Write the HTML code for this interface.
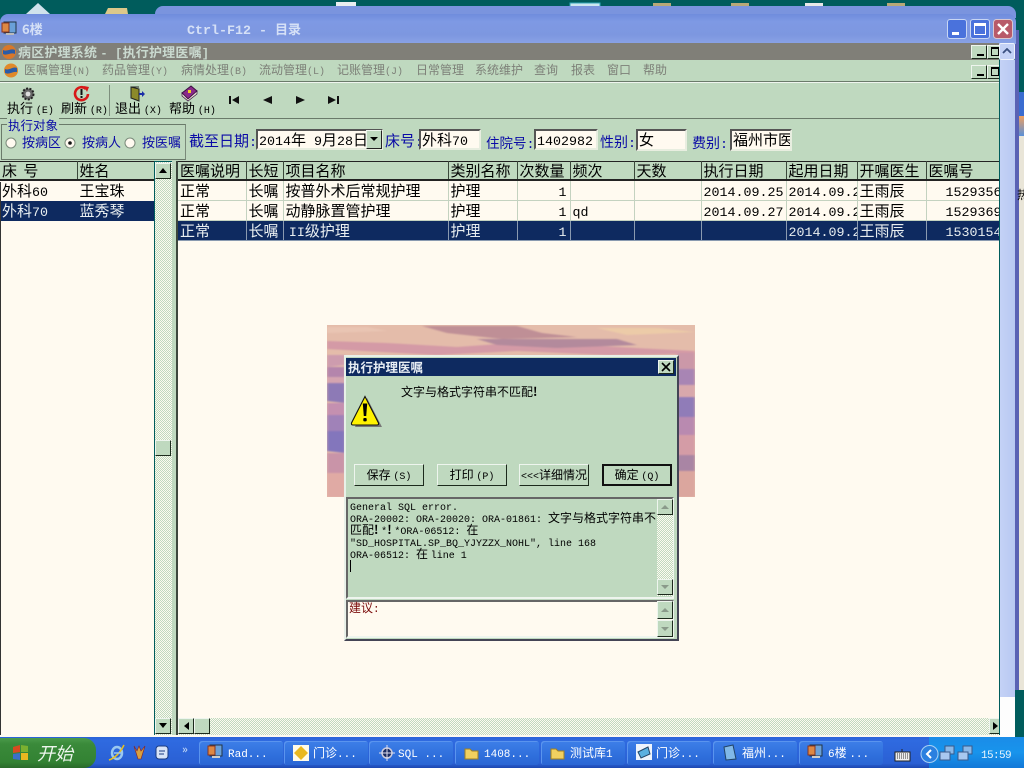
<!DOCTYPE html>
<html lang="zh"><head><meta charset="utf-8"><title>病区护理系统</title>
<style>
html,body{margin:0;padding:0;width:1024px;height:768px;overflow:hidden;background:#005c5c}
body{position:relative;font-family:"WenQuanYi Zen Hei","Noto Sans CJK SC",sans-serif;font-size:15px;color:#000}
div,span.a,svg.a{position:absolute}
.t{position:absolute;white-space:nowrap;line-height:20px}
.l{font-family:"Liberation Mono",monospace;font-size:13.33px;line-height:0}
.s{font-size:12px}.s .l{font-size:11px}
.b{color:#0a0aa6;font-size:14px}
.g{background:#bfd9bf}
.up{background:#bfd9bf;border:1px solid;border-color:#eef5ee #1c2a1c #1c2a1c #eef5ee;box-sizing:border-box}
.chk{background:conic-gradient(#bfd9bf 25%,#fdfaf0 0 50%,#bfd9bf 0 75%,#fdfaf0 0) 0 0/2px 2px}
.box{background:#fffaf0;border:2px solid;border-color:#555 #e8eee0 #e8eee0 #555;box-sizing:border-box;overflow:hidden;white-space:nowrap;line-height:17px;padding-left:1px}
.m{color:#7d8078;font-size:12px;line-height:16px;top:62px;position:absolute;white-space:nowrap}
.m .l{font-size:10px}
table{border-collapse:collapse;table-layout:fixed;position:absolute;left:0;top:0}
td{height:19px;padding:0 0 0 2px;overflow:hidden;white-space:nowrap;line-height:19px;border-right:1px solid #c4d2c0;border-bottom:1px solid #c4d2c0;box-sizing:content-box;background:#fffaf0}
tr.h td{background:#bfd9bf;height:17px;line-height:17px;border-right:1px solid #3a483a;border-bottom:2px solid #222;border-top:1px solid #222}
tr.sel td{background:#0e2a60;color:#e8eef0;border-color:#8a9ab0}
.task{position:absolute;top:741px;height:24px;width:84px;background:linear-gradient(#3e7fe8,#2f6fdc 60%,#2a66d4);border-radius:3px;color:#fff;font-size:12px;line-height:23px;white-space:nowrap;box-shadow:inset 1px 1px 0 #5a94ee}
.task .l{font-size:11px}
.task b{font-weight:normal;position:absolute;left:22px;top:0}
.btn{font-size:12px;line-height:20px;text-align:center;white-space:nowrap}
.btn .l{font-size:10px}
.mm .l{font-size:10px}
</style></head><body>

<!-- desktop fragments -->
<svg class="a" style="left:0;top:0" width="1024" height="14">
<path d="M26 14L38 3L50 14Z" fill="#cfe2ec"/><path d="M105 14L108 8H127L128 14Z" fill="#dcc88a"/>
<rect x="336" y="2" width="20" height="4" fill="#e8eef0"/>
<rect x="570" y="3" width="30" height="4" fill="#cce6f0" stroke="#3ab" stroke-width="1"/>
<rect x="653" y="3" width="18" height="3" fill="#b8a878"/><rect x="731" y="3" width="18" height="3" fill="#b8a878"/>
<rect x="805" y="3" width="18" height="3" fill="#e8e8e8"/><rect x="887" y="3" width="18" height="3" fill="#b8a878"/>
</svg>
<div style="left:155px;top:6px;width:861px;height:12px;background:#7a94de;border-radius:8px 8px 0 0"></div>

<!-- right of the window -->
<div style="left:1015px;top:92px;width:9px;height:598px;background:#e9e5d8"></div>
<div style="left:1019px;top:92px;width:5px;height:24px;background:#3a6cd0"></div>
<div style="left:1019px;top:116px;width:5px;height:20px;background:linear-gradient(#f0a060,#5a90d8)"></div>
<div style="left:1015px;top:30px;width:4px;height:660px;background:#5a62b4"></div>
<div class="t s" style="left:1017px;top:185px">热</div>

<!-- title bar -->
<div style="left:0;top:14px;width:1016px;height:30px;background:linear-gradient(#6f8cdc,#7e99e4 25%,#7d97e0 70%,#8aa3e6);border-radius:8px 8px 0 0"></div>
<svg class="a" style="left:1px;top:20px" width="17" height="17"><rect x="3" y="2" width="12" height="11" fill="#6aa0d8" stroke="#234"/><rect x="1" y="3" width="7" height="9" fill="#d84" stroke="#832"/><rect x="5" y="13" width="8" height="2" fill="#bbb"/></svg>
<div class="t" style="left:22px;top:19px;color:#d5e0f6;font-weight:bold;font-size:13px">6楼</div>
<div class="t" style="left:187px;top:19px;color:#d5e0f6;font-size:13px;font-weight:bold"><span class="l" style="font-weight:bold">Ctrl-F12 - </span>目录</div>
<div style="left:947px;top:19px;width:20px;height:20px;background:#4a72dc;border:1px solid #c8d6f4;border-radius:3px;box-sizing:border-box"><div style="left:4px;top:12px;width:7px;height:3px;background:#fff"></div></div>
<div style="left:970px;top:19px;width:20px;height:20px;background:#4a72dc;border:1px solid #c8d6f4;border-radius:3px;box-sizing:border-box"><div style="left:3px;top:3px;width:12px;height:12px;border:1px solid #fff;border-top-width:3px;box-sizing:border-box"></div></div>
<svg class="a" style="left:993px;top:19px" width="20" height="20"><rect x=".5" y=".5" width="19" height="19" rx="3" fill="#b85a6a" stroke="#d8c8d0"/><path d="M5 5L15 15M15 5L5 15" stroke="#fff" stroke-width="2.4"/></svg>

<!-- caption -->
<div style="left:0;top:43px;width:999px;height:17px;background:#807f78"></div>
<svg class="a" style="left:1px;top:44px" width="16" height="16"><circle cx="8" cy="8" r="7" fill="#d8782a"/><path d="M2 6C6 8 10 4 14 6V10C10 8 6 12 2 10Z" fill="#2a5ca8"/></svg>
<div class="t" style="left:18px;top:42px;color:#c9d9cf;font-size:13px;font-weight:bold;letter-spacing:.2px">病区护理系统 <span class="l" style="font-weight:bold;font-size:12px">- [</span>执行护理医嘱<span class="l" style="font-weight:bold;font-size:12px">]</span></div>
<div class="up" style="left:971px;top:45px;width:16px;height:14px"><div style="left:5px;top:8px;width:7px;height:2px;background:#000"></div></div>
<div class="up" style="left:987px;top:45px;width:12px;height:14px;border-right:0"><div style="left:3px;top:1px;width:8px;height:9px;border:1px solid #000;border-top-width:2px;box-sizing:border-box"></div></div>

<!-- menu -->
<div class="g" style="left:0;top:60px;width:999px;height:21px"></div>
<svg class="a" style="left:3px;top:62px" width="16" height="17"><circle cx="8" cy="8.5" r="7" fill="#e08a2a"/><path d="M2 7C6 9 10 4 14 6V10C10 9 6 13 2 11Z" fill="#2a5ca8"/></svg>
<div class="m" style="left:24px">医嘱管理<span class="l">(N)</span></div>
<div class="m" style="left:102px">药品管理<span class="l">(Y)</span></div>
<div class="m" style="left:181px">病情处理<span class="l">(B)</span></div>
<div class="m" style="left:259px">流动管理<span class="l">(L)</span></div>
<div class="m" style="left:337px">记账管理<span class="l">(J)</span></div>
<div class="m" style="left:416px">日常管理</div>
<div class="m" style="left:475px">系统维护</div>
<div class="m" style="left:534px">查询</div>
<div class="m" style="left:571px">报表</div>
<div class="m" style="left:607px">窗口</div>
<div class="m" style="left:643px">帮助</div>
<div class="up" style="left:971px;top:65px;width:16px;height:14px"><div style="left:5px;top:8px;width:7px;height:2px;background:#000"></div></div>
<div class="up" style="left:987px;top:65px;width:12px;height:14px;border-right:0"><div style="left:3px;top:1px;width:8px;height:9px;border:1px solid #000;border-top-width:2px;box-sizing:border-box"></div></div>
<div style="left:0;top:81px;width:999px;height:1px;background:#6a7a6a"></div>

<!-- toolbar -->
<div class="g" style="left:0;top:82px;width:999px;height:36px"></div>
<div style="left:0;top:82px;width:999px;height:1px;background:#eef5ee"></div>
<div style="left:0;top:118px;width:999px;height:1px;background:#6a7a6a"></div>
<div style="left:109px;top:85px;width:1px;height:31px;background:#7d8f7d"></div>
<svg class="a" style="left:20px;top:86px" width="16" height="16"><circle cx="8" cy="8" r="5.5" fill="#666" stroke="#222" stroke-width="2" stroke-dasharray="2 1.4"/><circle cx="8" cy="8" r="2.4" fill="#ddd"/></svg>
<svg class="a" style="left:73px;top:85px" width="17" height="17"><path d="M13 4A6.5 6.5 0 1 0 15 9" fill="none" stroke="#d81818" stroke-width="2.6"/><path d="M11 1L16 2L14 7Z" fill="#d81818"/><rect x="7.5" y="4" width="2" height="6" fill="#111"/><rect x="7.5" y="11" width="2" height="2" fill="#111"/></svg>
<svg class="a" style="left:130px;top:86px" width="16" height="16"><path d="M1 1L9 3V15L1 12Z" fill="#8c8a2a" stroke="#222"/><path d="M9 1H1" stroke="#222"/><path d="M9 7H12V5L15 8L12 11V9H9Z" fill="#1a2ca8"/></svg>
<svg class="a" style="left:181px;top:85px" width="17" height="17"><path d="M1 8L10 1L16 6L7 14Z" fill="#8a2a8a" stroke="#3a1040"/><path d="M1 8V11L7 16L16 9V6L7 14Z" fill="#e8e0d0" stroke="#3a1040" stroke-width=".7"/><rect x="7" y="5" width="3" height="3" fill="#f0d020"/></svg>
<div class="t" style="left:7px;top:98px;font-size:13px">执行 <span class="l" style="font-size:10px">(E)</span></div>
<div class="t" style="left:61px;top:98px;font-size:13px">刷新 <span class="l" style="font-size:10px">(R)</span></div>
<div class="t" style="left:115px;top:98px;font-size:13px">退出 <span class="l" style="font-size:10px">(X)</span></div>
<div class="t" style="left:169px;top:98px;font-size:13px">帮助 <span class="l" style="font-size:10px">(H)</span></div>
<svg class="a" style="left:225px;top:94px" width="120" height="12" fill="#111"><rect x="4" y="2" width="2" height="8"/><path d="M14 2V10L7 6Z"/><path d="M47 2V10L38 6Z"/><path d="M71 2V10L80 6Z"/><path d="M103 2V10L111 6Z"/><rect x="112" y="2" width="2" height="8"/></svg>

<!-- filter row -->
<div class="g" style="left:0;top:119px;width:999px;height:42px"></div>
<div style="left:1px;top:124px;width:185px;height:36px;border:1px solid #6a7a6a;border-right-color:#7a8a7a;box-sizing:border-box"></div>
<div class="t" style="left:7px;top:115px;background:#bfd9bf;color:#0a0aa6;font-size:12.5px;padding:0 1px;line-height:19px">执行对象</div>
<svg class="a" style="left:4px;top:136px" width="135" height="14"><circle cx="7" cy="7" r="5" fill="#fffaf0" stroke="#7a8a7a"/><circle cx="66" cy="7" r="5" fill="#fffaf0" stroke="#7a8a7a"/><circle cx="66" cy="7" r="1.8" fill="#111"/><circle cx="126" cy="7" r="5" fill="#fffaf0" stroke="#7a8a7a"/></svg>
<div class="t" style="left:22px;top:132px;color:#0a0aa6;font-size:13px">按病区</div>
<div class="t" style="left:82px;top:132px;color:#0a0aa6;font-size:13px">按病人</div>
<div class="t" style="left:142px;top:132px;color:#0a0aa6;font-size:13px">按医嘱</div>
<div class="t b" style="left:189px;top:131px;font-size:15px">截至日期<span class="l">:</span></div>
<div class="box" style="left:256px;top:129px;width:127px;height:21px;font-size:15px"><span class="l">2014</span>年<span class="l">&nbsp;9</span>月<span class="l">28</span>日</div>
<div class="up" style="left:366px;top:130px;width:16px;height:19px;border-color:#eef5ee #222 #222 #eef5ee"><svg class="a" style="left:3px;top:6px" width="9" height="5"><path d="M0 0H8L4 4Z"/></svg></div>
<div class="t b" style="left:385px;top:131px;font-size:15px">床号<span class="l">:</span></div>
<div class="box" style="left:419px;top:129px;width:62px;height:21px;font-size:15px">外科<span class="l">70</span></div>
<div class="t b" style="left:486px;top:132px;font-size:13.5px">住院号<span class="l">:</span></div>
<div class="box" style="left:534px;top:129px;width:64px;height:21px"><span class="l">1402982</span></div>
<div class="t b" style="left:600px;top:132px">性别<span class="l">:</span></div>
<div class="box" style="left:636px;top:129px;width:51px;height:22px">女</div>
<div class="t b" style="left:692px;top:133px">费别<span class="l">:</span></div>
<div class="box" style="left:730px;top:129px;width:62px;height:22px">福州市医</div>

<!-- left grid -->
<div style="left:0;top:161px;width:154px;height:574px;background:#fffaf0;overflow:hidden">
<table style="width:154px"><colgroup><col style="width:77px"><col style="width:77px"></colgroup>
<tr class="h"><td>床 <span style="padding-left:3px">号</span></td><td>姓名</td></tr>
<tr><td style="border-right-color:#fffaf0;border-bottom-color:#fffaf0">外科<span class="l">60</span></td><td style="border-color:#fffaf0">王宝珠</td></tr>
<tr class="sel"><td style="border-color:#0e2a60">外科<span class="l">70</span></td><td style="border-color:#0e2a60">蓝秀琴</td></tr>
</table></div>
<div style="left:0;top:182px;width:1px;height:553px;background:#333"></div>
<div class="chk" style="left:155px;top:162px;width:17px;height:573px"></div>
<div class="up" style="left:155px;top:163px;width:16px;height:16px"><svg class="a" style="left:3px;top:4px" width="9" height="6"><path d="M0 5H8L4 0Z"/></svg></div>
<div class="up" style="left:155px;top:718px;width:16px;height:16px"><svg class="a" style="left:3px;top:4px" width="9" height="6"><path d="M0 0H8L4 5Z"/></svg></div>
<div class="up" style="left:155px;top:440px;width:16px;height:16px"></div>
<div class="g" style="left:172px;top:161px;width:4px;height:574px"></div>
<div style="left:176px;top:161px;width:2px;height:574px;background:#3c463c"></div>

<!-- right grid -->
<div style="left:178px;top:161px;width:821px;height:557px;background:#fffaf0;overflow:hidden">
<table style="width:821px">
<colgroup><col style="width:68px"><col style="width:37px"><col style="width:165px"><col style="width:69px"><col style="width:53px"><col style="width:64px"><col style="width:67px"><col style="width:85px"><col style="width:71px"><col style="width:69px"><col style="width:73px"></colgroup>
<tr class="h"><td>医嘱说明</td><td>长短</td><td>项目名称</td><td>类别名称</td><td>次数量</td><td>频次</td><td>天数</td><td>执行日期</td><td>起用日期</td><td>开嘱医生</td><td>医嘱号</td></tr>
<tr><td>正常</td><td>长嘱</td><td>按普外术后常规护理</td><td>护理</td><td style="text-align:right;padding-right:3px"><span class="l">1</span></td><td></td><td></td><td><span class="l">2014.09.25</span></td><td><span class="l">2014.09.29</span></td><td>王雨辰</td><td style="padding-left:19px"><span class="l">1529356</span></td></tr>
<tr><td>正常</td><td>长嘱</td><td>动静脉置管护理</td><td>护理</td><td style="text-align:right;padding-right:3px"><span class="l">1</span></td><td><span class="l">qd</span></td><td></td><td><span class="l">2014.09.27</span></td><td><span class="l">2014.09.29</span></td><td>王雨辰</td><td style="padding-left:19px"><span class="l">1529369</span></td></tr>
<tr class="sel"><td>正常</td><td>长嘱</td><td>&nbsp;<span class="l">II</span>级护理</td><td>护理</td><td style="text-align:right;padding-right:3px"><span class="l">1</span></td><td></td><td></td><td></td><td><span class="l">2014.09.29</span></td><td>王雨辰</td><td style="padding-left:19px"><span class="l">1530154</span></td></tr>
</table></div>
<div class="chk" style="left:178px;top:718px;width:821px;height:17px"></div>
<div class="up" style="left:178px;top:718px;width:16px;height:16px"><svg class="a" style="left:5px;top:3px" width="6" height="9"><path d="M5 0V8L0 4Z"/></svg></div>
<div class="up" style="left:194px;top:718px;width:16px;height:16px"></div>
<div class="up" style="left:989px;top:718px;width:10px;height:16px;border-right:0"><svg class="a" style="left:3px;top:3px" width="6" height="9"><path d="M0 0V8L5 4Z"/></svg></div>
<div style="left:0;top:735px;width:1000px;height:3px;background:#fdfaf0"></div>

<!-- window scrollbar -->
<div style="left:1000px;top:60px;width:15px;height:637px;background:linear-gradient(90deg,#c4d2f6,#b8c8f2)"></div>
<div style="left:1000px;top:697px;width:15px;height:41px;background:#fdfdfd"></div>
<div style="left:999px;top:43px;width:16px;height:17px;background:#c4d2f6;border:1px solid #eef2fc;border-radius:2px;box-sizing:border-box"><svg class="a" style="left:2px;top:4px" width="10" height="7"><path d="M1 5L5 1L9 5" fill="none" stroke="#3a5080" stroke-width="1.8"/></svg></div>

<!-- dialog backdrop -->
<svg class="a" style="left:327px;top:325px" width="368" height="172">
<defs><filter id="bl" x="-5%" y="-20%" width="110%" height="140%"><feGaussianBlur stdDeviation="1.2 .7"/></filter></defs>
<rect width="368" height="172" fill="#e4bcaa"/>
<g filter="url(#bl)">
<path d="M95 1H190L215 8L250 12L175 14L120 8Z" fill="#bf8f96"/>
<path d="M0 16L60 18L130 22L200 17L290 22L368 26V29L280 30L190 26L110 30L0 24Z" fill="#d49aa6"/>
<path d="M150 14H290L310 20L230 23L170 20Z" fill="#b38a9c"/>
<path d="M0 2H40L60 6L0 8Z" fill="#e9c5b3"/><path d="M270 3H330L368 7L300 10Z" fill="#eccba8"/>
<path d="M0 30H18V40L0 42Z" fill="#cd9cae"/><path d="M0 42H18V52H0Z" fill="#b485ac"/><path d="M0 52H18V58H0Z" fill="#d4a4b0"/>
<path d="M0 58H18V78L0 76Z" fill="#8d7ab6"/><path d="M0 78H18V90H0Z" fill="#c490b0"/><path d="M0 90H18V106H0Z" fill="#a082b8"/><path d="M0 106H18V128L0 126Z" fill="#8376bc"/><path d="M0 128H18V148H0Z" fill="#c994a8"/><path d="M0 148H18V172H0Z" fill="#e0aaa4"/>
<path d="M350 28H368V44H350Z" fill="#cb98a8"/><path d="M350 44H368V60H350Z" fill="#a885b4"/><path d="M350 60H368V72H350Z" fill="#d8a8ac"/><path d="M350 72H368V92H350Z" fill="#907cb8"/><path d="M350 92H368V110H350Z" fill="#b98ab0"/><path d="M350 110H368V130H350Z" fill="#d49ca6"/><path d="M350 130H368V146H350Z" fill="#a985a4"/><path d="M350 146H368V172H350Z" fill="#dba69e"/>
</g>
</svg>

<!-- dialog -->
<div class="g" style="left:344px;top:355px;width:335px;height:286px;border:2px solid;border-color:#e8f0e8 #445 #445 #e8f0e8;box-sizing:border-box"></div>
<div style="left:346px;top:358px;width:330px;height:18px;background:#0e2a60"></div>
<div class="t" style="left:348px;top:357px;color:#e8eef4;font-size:12.5px;font-weight:bold">执行护理医嘱</div>
<div class="up" style="left:658px;top:360px;width:16px;height:14px"><svg class="a" style="left:2px;top:1px" width="10" height="10"><path d="M1 1L9 9M9 1L1 9" stroke="#000" stroke-width="1.6"/></svg></div>
<svg class="a" style="left:350px;top:395px" width="34" height="34"><path d="M15 2L30 31H3Z" fill="#777" transform="translate(2 1)"/><path d="M15 1.500L28.500 28Q29 30 27 30H3Q1 30 1.500 28Z" fill="#fff200" stroke="#111" stroke-width="1.100"/><path d="M12.800 8.500H17.200L16.200 21H13.800Z" fill="#000"/><rect x="13.300" y="23" width="3.400" height="3.400" rx="1" fill="#000"/></svg>
<div class="t" style="left:401px;top:382px;font-size:12px">文字与格式字符串不匹配<b style="font-size:12px">!</b></div>

<div class="up btn" style="left:354px;top:464px;width:70px;height:22px">保存 <span class="l">(S)</span></div>
<div class="up btn" style="left:437px;top:464px;width:70px;height:22px">打印 <span class="l">(P)</span></div>
<div class="up btn" style="left:519px;top:464px;width:70px;height:22px"><span class="l">&lt;&lt;&lt;</span>详细情况</div>
<div class="up btn" style="left:602px;top:464px;width:70px;height:22px;border:2px solid #111;line-height:18px">确定 <span class="l">(Q)</span></div>

<div style="left:346px;top:497px;width:328px;height:102px;background:#bfd9bf;border:2px solid;border-color:#666 #eef5ee #eef5ee #666;box-sizing:border-box;overflow:hidden"></div>
<div class="mm" style="left:350px;top:500px;font-size:12px;line-height:12px;width:307px;white-space:nowrap">
<span class="l">General SQL error.</span><br>
<span class="l">ORA-20002: ORA-20020: ORA-01861: </span>文字与格式字符串不<br>
匹配<b>!</b> <span class="l">*</span><b>!</b> <span class="l">*ORA-06512: </span>在<br>
<span class="l">"SD_HOSPITAL.SP_BQ_YJYZZX_NOHL", line 168</span><br>
<span class="l">ORA-06512: </span>在 <span class="l">line 1</span></div>
<div style="left:350px;top:560px;width:1px;height:12px;background:#000"></div>
<div class="chk" style="left:657px;top:499px;width:16px;height:97px"></div>
<div class="up" style="left:657px;top:499px;width:16px;height:16px"><svg class="a" style="left:3px;top:5px" width="9" height="5"><path d="M0 4H8L4 0Z" fill="#8a9a8a"/></svg></div>
<div class="up" style="left:657px;top:579px;width:16px;height:16px"><svg class="a" style="left:3px;top:5px" width="9" height="5"><path d="M0 0H8L4 4Z" fill="#8a9a8a"/></svg></div>

<div style="left:346px;top:600px;width:328px;height:38px;background:#fffaf0;border:2px solid;border-color:#666 #eef5ee #eef5ee #666;box-sizing:border-box"></div>
<div class="t" style="left:349px;top:598px;color:#7a0a0a;font-size:12px">建议<span class="l" style="font-size:11px">:</span></div>
<div class="up" style="left:657px;top:601px;width:16px;height:18px"><svg class="a" style="left:3px;top:6px" width="9" height="5"><path d="M0 4H8L4 0Z" fill="#8a9a8a"/></svg></div>
<div class="up" style="left:657px;top:620px;width:16px;height:17px"><svg class="a" style="left:3px;top:6px" width="9" height="5"><path d="M0 0H8L4 4Z" fill="#8a9a8a"/></svg></div>

<!-- taskbar -->
<div style="left:0;top:737px;width:1024px;height:31px;background:linear-gradient(#2a62d8,#2f6ae0 12%,#2a60d4 85%,#1c48b0)"></div>
<div style="left:0;top:738px;width:96px;height:30px;background:linear-gradient(#4a9a4a,#3a8a3a 20%,#338233 80%,#2a6a2a);border-radius:0 12px 12px 0"></div>
<svg class="a" style="left:11px;top:744px" width="20" height="18"><path d="M2 3L9 1V8L2 9Z" fill="#d84a20"/><path d="M10 1L17 2V8L10 8Z" fill="#7ab030"/><path d="M2 10L9 9V16L2 15Z" fill="#3a70c8"/><path d="M10 9H17V16L10 16Z" fill="#e8b820"/></svg>
<div class="t" style="left:37px;top:742px;color:#eef6ee;font-size:18px;font-style:italic;line-height:22px">开始</div>
<svg class="a" style="left:108px;top:743px" width="66" height="22">
<ellipse cx="9" cy="10" rx="5" ry="6" fill="none" stroke="#9ac8f0" stroke-width="2.500"/><path d="M1 17Q10 14 16 2" fill="none" stroke="#e8c020" stroke-width="1.500"/><path d="M6 10H13" stroke="#9ac8f0" stroke-width="1.500"/>
<path d="M26 3L30 16H33L37 3L33 8L31 3L29 8Z" fill="#d8a040" stroke="#822" stroke-width=".6"/>
<rect x="48" y="3" width="12" height="13" rx="3" fill="#d8e4f8" stroke="#1a3a80"/><path d="M51 8H57M51 11H56" stroke="#1a3a80"/>
</svg>
<div class="t" style="left:182px;top:739px;color:#b8d0f4;font-size:11px;font-weight:bold">»</div>

<div class="task" style="left:199px"><svg class="a" style="left:8px;top:3px" width="16" height="16"><rect x="3" y="1" width="12" height="11" fill="#6aa0d8" stroke="#234"/><rect x="1" y="2" width="7" height="9" fill="#d84" stroke="#832"/><rect x="5" y="12" width="8" height="2" fill="#ccc"/></svg><b style="left:29px"><span class="l">Rad...</span></b></div>
<div class="task" style="left:284px"><svg class="a" style="left:9px;top:4px" width="16" height="16"><rect width="16" height="16" fill="#fffbe8"/><path d="M8 1L15 8L8 15L1 8Z" fill="#e8b820"/></svg><b style="left:29px">门诊<span class="l">...</span></b></div>
<div class="task" style="left:369px"><svg class="a" style="left:10px;top:4px" width="16" height="16"><circle cx="8" cy="8" r="5" fill="#1a2a60" stroke="#ccd" stroke-width="1.500"/><path d="M8 0V16M0 8H16" stroke="#dde"/></svg><b style="left:29px"><span class="l">SQL ...</span></b></div>
<div class="task" style="left:455px"><svg class="a" style="left:9px;top:6px" width="16" height="13"><path d="M1 2H6L8 4H14V12H1Z" fill="#f0d060" stroke="#a08020"/></svg><b style="left:29px"><span class="l">1408...</span></b></div>
<div class="task" style="left:541px"><svg class="a" style="left:9px;top:6px" width="16" height="13"><path d="M1 2H6L8 4H14V12H1Z" fill="#f0d060" stroke="#a08020"/></svg><b style="left:29px">测试库<span class="l">1</span></b></div>
<div class="task" style="left:627px"><svg class="a" style="left:9px;top:3px" width="16" height="17"><rect width="16" height="16" fill="#eef4fc"/><path d="M2 8L12 3L14 10L5 14Z" fill="#5ab0e0" stroke="#246"/></svg><b style="left:29px">门诊<span class="l">...</span></b></div>
<div class="task" style="left:713px"><svg class="a" style="left:10px;top:3px" width="14" height="17"><path d="M1 3L10 1L13 15L3 16Z" fill="#80b8e8" stroke="#246"/></svg><b style="left:29px">福州<span class="l">...</span></b></div>
<div class="task" style="left:799px"><svg class="a" style="left:8px;top:3px" width="16" height="16"><rect x="3" y="1" width="12" height="11" fill="#6aa0d8" stroke="#234"/><rect x="1" y="2" width="7" height="9" fill="#d84" stroke="#832"/><rect x="5" y="12" width="8" height="2" fill="#ccc"/></svg><b style="left:29px"><span class="l">6</span>楼 <span class="l">...</span></b></div>
<svg class="a" style="left:894px;top:748px" width="17" height="14"><rect x="1" y="4" width="15" height="9" fill="#eee" stroke="#222"/><path d="M3 6H14M3 8H14M3 10H14" stroke="#333" stroke-dasharray="1 1"/><path d="M8 4V1" stroke="#222"/></svg>
<div style="left:929px;top:737px;width:95px;height:31px;background:linear-gradient(#1a8ce8,#1894ec 50%,#1278d8)"></div>
<svg class="a" style="left:920px;top:745px" width="60" height="20">
<circle cx="9.500" cy="9" r="8.500" fill="#2a80e0" stroke="#a8d0f4"/><path d="M11 5L7 9L11 13" fill="none" stroke="#fff" stroke-width="2"/>
<rect x="25" y="1" width="9" height="8" fill="#8ab8e8" stroke="#3a5a8a"/><rect x="20" y="7" width="10" height="8" fill="#a8c8f0" stroke="#3a5a8a"/>
<rect x="43" y="1" width="9" height="8" fill="#8ab8e8" stroke="#3a5a8a"/><rect x="38" y="7" width="10" height="8" fill="#a8c8f0" stroke="#3a5a8a"/>
</svg>
<div class="t" style="left:981px;top:743px;color:#e8f4fc;line-height:20px"><span class="l" style="font-size:11px;letter-spacing:-.6px">15:59</span></div>
</body></html>
